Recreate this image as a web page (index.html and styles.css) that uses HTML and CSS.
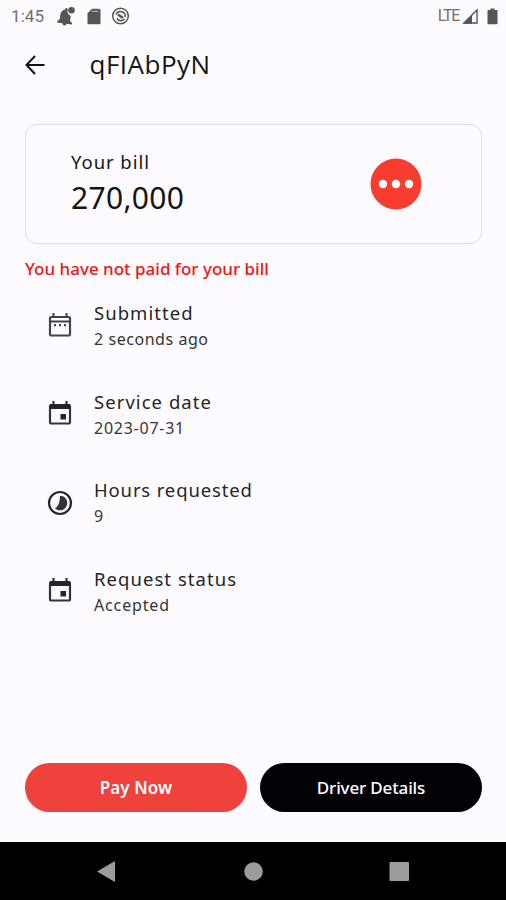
FILE: index.html
```html
<!DOCTYPE html>
<html lang="en">
<head>
<meta charset="utf-8">
<title>Request details</title>
<link rel="stylesheet" href="styles.css">
</head>
<body>
<div class="screen">
  <div class="status">
    <span class="clock">1:45</span>
    <svg class="s-left" width="76" height="20" viewBox="0 0 76 20">
      <g fill="#555">
        <path d="M1 17.500v-1.200l2.200-2.200V9.500c0-3 1.500-5.200 4-5.900C7.200 2.200 8 2 8.500 2c.7 0 1.200.5 1.300 1.500a5 5 0 0 0 3.900 5.700v4.900l2.300 2.200v1.200h-5.500a2 2 0 0 1-4 0z" transform="rotate(8 8.500 10)"/>
        <circle cx="14.500" cy="4.200" r="3.300"/>
        <path d="M35 2.800h7q1.500 0 1.500 1.500v12.400q0 1.500-1.500 1.500H32q-1.500 0-1.500-1.500V7.300z"/>
      </g>
      <path d="M34.500 5.300h7" stroke="#aaa" stroke-width="1.300"/>
      <g fill="none" stroke="#555">
        <circle cx="63.500" cy="10" r="7.800" stroke-width="1.500"/>
        <path d="M59 8.500a4.800 4.800 0 0 1 9.200 2.500M67.500 13a4.600 4.600 0 0 1-7.600-.5" stroke-width="1.500"/>
        <path d="M61 8.500l5 3.500" stroke-width="2.600"/>
      </g>
    </svg>
    <span class="lte">LTE</span>
    <svg class="s-right" width="36" height="20" viewBox="0 0 36 20">
      <path d="M2 17L15 4v13z" fill="#fff" stroke="#555" stroke-width="1.400"/>
      <path d="M1 17.700L10 8.700v9z" fill="#555"/>
      <path d="M28.500 2.500h4v1.500H35q.5 0 .5.5v13q0 .7-.7.700h-8.600q-.7 0-.7-.7v-13q0-.5.500-.5h2.500z" fill="#555"/>
    </svg>
  </div>
  <header class="bar">
    <svg class="back" width="20" height="20" viewBox="0 0 20 20" fill="none" stroke="#111" stroke-width="2"><path d="M19.500 10H1.700M10 1L1.500 10l8.500 9"/></svg>
    <h1>qFIAbPyN</h1>
  </header>
  <main>
    <section class="card">
      <div>
        <div class="label">Your bill</div>
        <div class="amount">270,000</div>
      </div>
      <svg width="52" height="52" viewBox="0 0 52 52"><circle cx="26" cy="26" r="25.500" fill="#f63d30"/><g fill="#fff"><circle cx="13" cy="26" r="4.200"/><circle cx="26" cy="26" r="4.200"/><circle cx="39" cy="26" r="4.200"/></g></svg>
    </section>
    <p class="warning">You have not paid for your bill</p>
    <ul class="details">
      <li>
        <svg width="26" height="26" viewBox="0 0 26 26"><rect x="3" y="5" width="20" height="18.500" rx="1.500" fill="none" stroke="#44424c" stroke-width="2.200"/><path d="M3 9.500h20M6.500 1v4M19.500 1v4" stroke="#44424c" stroke-width="2"/><path d="M7 12h2v2.200H7zM12 12h2v2.200h-2zM17 12h2v2.200h-2z" fill="#44424c"/></svg>
        <div><div class="name n1">Submitted</div><div class="value v1">2 seconds ago</div></div>
      </li>
      <li>
        <svg width="26" height="26" viewBox="0 0 26 26"><rect x="3" y="5" width="20" height="18.500" rx="1.500" fill="none" stroke="#34323c" stroke-width="2.200"/><path d="M3 4h20v5H3zM5.500 1h2v4h-2zM18.500 1h2v4h-2zM13.500 14H19v5.500h-5.500z" fill="#25232d"/></svg>
        <div><div class="name n2">Service date</div><div class="value v2">2023-07-31</div></div>
      </li>
      <li class="hours">
        <svg width="26" height="26" viewBox="0 0 26 26"><circle cx="13" cy="13" r="11" fill="none" stroke="#25232d" stroke-width="2.200"/><path d="M13 5.700A7.300 7.300 0 1 1 7.800 18.200Q13 16 13 5.700z" fill="#34323c"/></svg>
        <div><div class="name n3">Hours requested</div><div class="value">9</div></div>
      </li>
      <li>
        <svg width="26" height="26" viewBox="0 0 26 26"><rect x="3" y="5" width="20" height="18.500" rx="1.500" fill="none" stroke="#34323c" stroke-width="2.200"/><path d="M3 4h20v5H3zM5.500 1h2v4h-2zM18.500 1h2v4h-2zM13.500 14H19v5.500h-5.500z" fill="#25232d"/></svg>
        <div><div class="name n4">Request status</div><div class="value v4">Accepted</div></div>
      </li>
    </ul>
  </main>
  <div class="actions">
    <button class="pay">Pay Now</button>
    <button class="driver">Driver Details</button>
  </div>
  <nav>
    <svg width="506" height="58" viewBox="0 0 506 58" fill="#9c9c9c"><path d="M97 29.500L115 19v21z"/><circle cx="253.500" cy="29.500" r="9.300"/><rect x="389.500" y="20" width="19.500" height="19" rx="1"/></svg>
  </nav>
</div>
</body>
</html>
```
FILE: styles.css
```css
* { box-sizing: border-box; margin: 0; padding: 0; }
body { font-family: "Noto Sans", "Open Sans", sans-serif; background: #fdfbff; color: #151515; }
svg { display: block; flex: none; }
.screen { width: 506px; height: 900px; display: flex; flex-direction: column; white-space: nowrap; overflow: hidden; }
.status { height: 32px; display: flex; align-items: center; padding: 0 8px 0 11px; color: #707070; }
.clock { width: 46px; font: 17px/32px Roboto, sans-serif; letter-spacing: 0.1px; }
.s-left { margin-top: -1px; }
.lte { margin-left: auto; font: 16px/32px Roboto, sans-serif; letter-spacing: -1.3px; margin-right: 3px; }
.s-right { margin-top: -1px; }
.bar { height: 68px; display: flex; align-items: center; padding-left: 25px; }
.bar h1 { margin-left: 44.500px; font-family: "Open Sans", sans-serif; font-size: 26px; font-weight: 400; line-height: 34px; letter-spacing: 0.5px; margin-top: -4px; }
.back { margin-top: -3px; }
main { flex: 1; padding: 24px 24px 0 25px; }
.card { height: 120px; border: 1px solid #dedce0; border-radius: 12px; display: flex; align-items: center; justify-content: space-between; padding: 0 59px 0 45px; }
.label { font-size: 18.500px; line-height: 26px; letter-spacing: 0.95px; padding-top: 1px; }
.amount { font-size: 30px; line-height: 46px; letter-spacing: 0.3px; margin-bottom: 0; }
.warning { margin-top: 12px; color: #ed1712; font-size: 17px; line-height: 26px; font-weight: 500; }
.details { list-style: none; margin-top: 17px; }
.details li { height: 88.600px; display: flex; padding-left: 22px; }
.details li > svg { margin-top: 12.500px; margin-right: 21px; }
.details .hours > svg { margin-top: 13.500px; }
.name { font-size: 18.500px; line-height: 27px; letter-spacing: 1.05px; color: #252525; }
.n3 { letter-spacing: 0.85px; }
.value { font-size: 16px; line-height: 27px; letter-spacing: 0.55px; color: #353535; }
.v2 { letter-spacing: 0.75px; }
.v4 { letter-spacing: 0.85px; }
.actions { height: 78.500px; display: flex; gap: 13px; padding: 0 24px 0 25px; align-items: flex-start; }
button { flex: 1; height: 49px; border: 0; border-radius: 25px; color: #fff; font-family: inherit; font-size: 17px; font-weight: 500; letter-spacing: -0.15px; padding-bottom: 1px; }
.pay { background: #ef423c; font-weight: 600; letter-spacing: 0.1px; }
.driver { background: #020106; }
nav { height: 58.500px; background: #000; }
```
